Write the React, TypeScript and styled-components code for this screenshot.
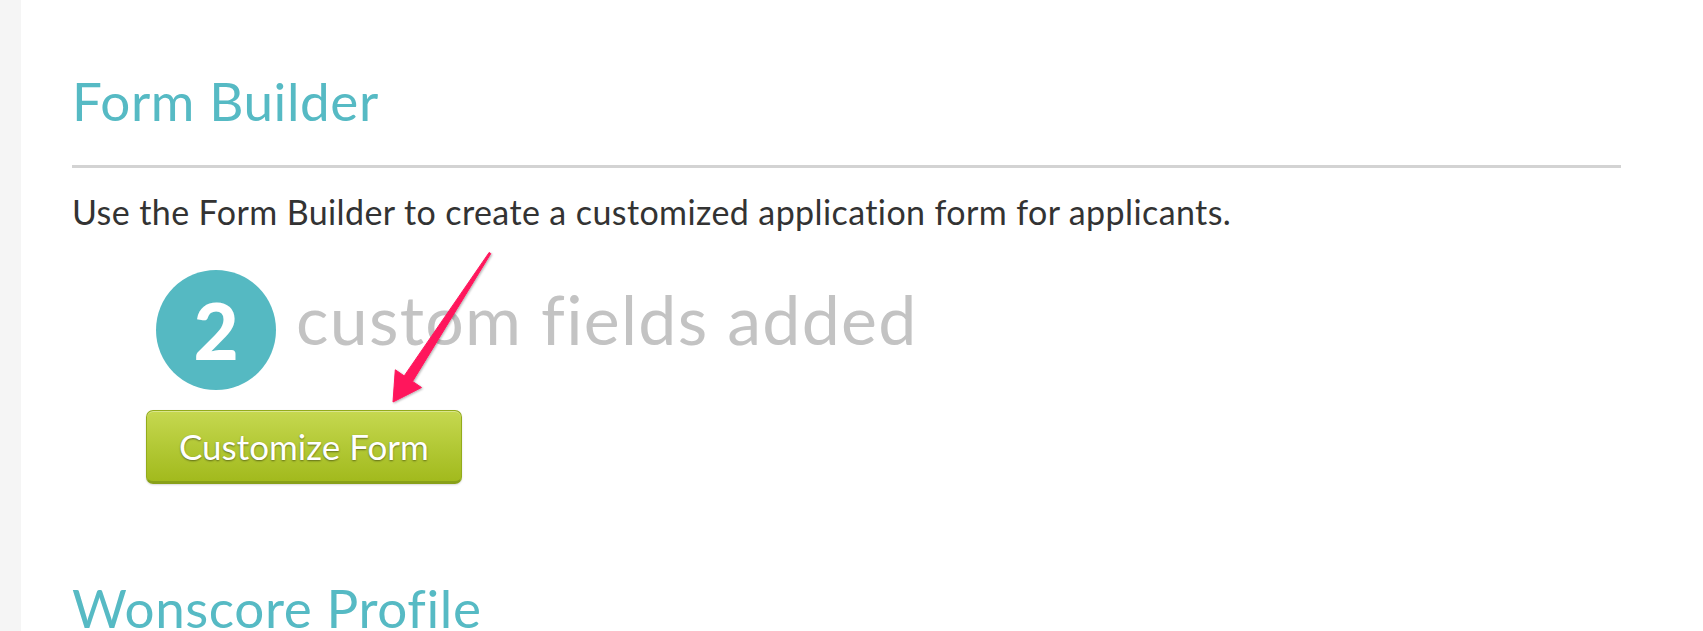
import React from 'react';
import styled, { createGlobalStyle } from 'styled-components';

const GlobalStyle = createGlobalStyle`
  html, body {
    margin: 0;
    padding: 0;
    background: #ffffff;
  }
  body {
    font-family: Lato, "Open Sans", "Liberation Sans", sans-serif;
    color: #333333;
    overflow: hidden;
  }
`;

const Layout = styled.div`
  position: relative;
  display: flex;
  width: 1703px;
  height: 631px;
  overflow: hidden;
`;

const Sidebar = styled.aside`
  width: 21px;
  flex: none;
  background: #f5f5f5;
`;

const Main = styled.main`
  flex: 1;
  padding: 69px 82px 0 51px;
`;

const SectionTitle = styled.h2<{ $divided?: boolean }>`
  margin: 0;
  font-size: 53px;
  line-height: 64px;
  font-weight: 400;
  letter-spacing: 0.6px;
  color: #56bac4;
  padding-bottom: ${(p) => (p.$divided ? '32px' : '0')};
  border-bottom: ${(p) => (p.$divided ? '3px solid #d3d3d3' : 'none')};
`;

const Intro = styled.p`
  margin: 24px 0 0;
  font-size: 34px;
  line-height: 40px;
  letter-spacing: 0.4px;
  color: #333333;
`;

const CountRow = styled.div`
  display: flex;
  align-items: flex-start;
  gap: 20px;
  margin: 38px 0 0 84px;
`;

const CountBadge = styled.div`
  width: 120px;
  height: 120px;
  border-radius: 50%;
  background: #55b9c2;
  color: #ffffff;
  display: flex;
  align-items: center;
  justify-content: center;
  font-size: 78px;
  font-weight: 900;
  line-height: 1;
`;

const CountLabel = styled.span`
  margin-top: 9px;
  font-size: 68px;
  line-height: 80px;
  letter-spacing: 1.3px;
  color: #c3c3c3;
`;

const CustomizeButton = styled.button`
  display: block;
  margin: 20px 0 0 74px;
  height: 74px;
  padding: 0 32px;
  border: 1px solid #93ab1b;
  border-bottom: 3px solid #88a018;
  border-radius: 7px;
  background: linear-gradient(#c6d850, #b3c936 50%, #a2ba1d);
  box-shadow: inset 0 1px 0 rgba(255, 255, 255, 0.35), 0 1px 2px rgba(0, 0, 0, 0.15);
  color: #ffffff;
  font-family: Lato, "Open Sans", "Liberation Sans", sans-serif;
  font-size: 35px;
  line-height: 1;
  text-shadow: 0 1px 2px rgba(0, 0, 0, 0.45);
  cursor: pointer;
`;

const NextSection = styled.section`
  margin-top: 92px;
`;

const Overlay = styled.svg`
  position: absolute;
  left: 0;
  top: 0;
  pointer-events: none;
`;

const Arrow = () => (
  <Overlay width="1703" height="631" viewBox="0 0 1703 631">
    <defs>
      <filter id="arrowShadow" x="-20%" y="-20%" width="140%" height="140%">
        <feDropShadow dx="1" dy="1" stdDeviation="1.2" floodColor="#000" floodOpacity="0.3" />
      </filter>
    </defs>
    <polygon
      points="490.8,253.6 412.6,381.4 421.5,387.5 393,402 395.3,369.8 404.2,375.9 489.2,252.4"
      fill="#ff175c"
      strokeLinejoin="round"
      stroke="#ff175c"
      strokeWidth="1"
      filter="url(#arrowShadow)"
    />
  </Overlay>
);

const App = () => {
  return (
    <>
      <GlobalStyle />
      <Layout>
        <Sidebar />
        <Main>
          <SectionTitle $divided>Form Builder</SectionTitle>
          <Intro>Use the Form Builder to create a customized application form for applicants.</Intro>
          <CountRow>
            <CountBadge>2</CountBadge>
            <CountLabel>custom fields added</CountLabel>
          </CountRow>
          <CustomizeButton>Customize Form</CustomizeButton>
          <NextSection>
            <SectionTitle>Wonscore Profile</SectionTitle>
          </NextSection>
        </Main>
        <Arrow />
      </Layout>
    </>
  );
};

export default App;
